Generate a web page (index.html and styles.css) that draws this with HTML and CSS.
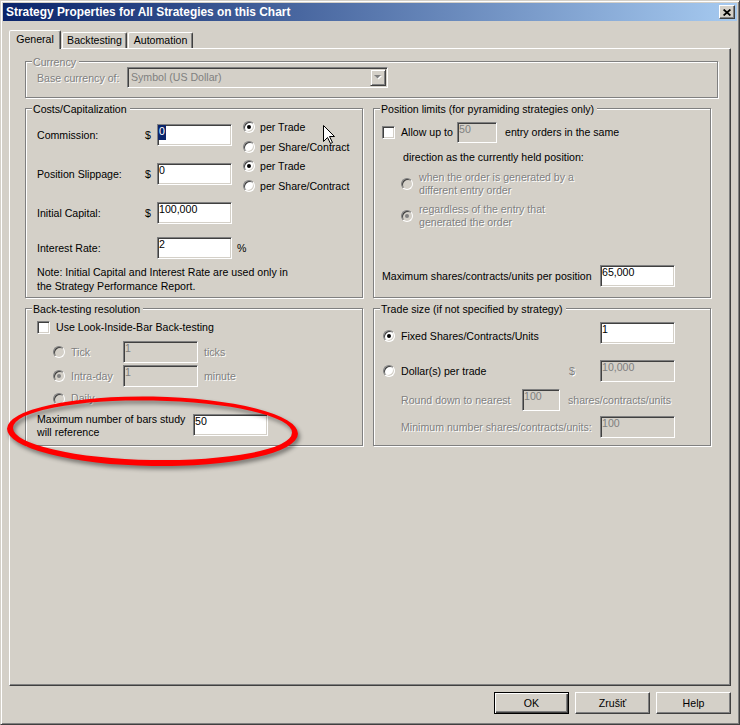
FILE: index.html
```html
<!DOCTYPE html>
<html lang="en">
<head>
<meta charset="utf-8">
<title>Strategy Properties</title>
<link rel="stylesheet" href="styles.css">
</head>
<body>
<div class="window">
  <div class="titlebar">
    <span class="title">Strategy Properties for All Strategies on this Chart</span>
    <span class="close"><svg width="8" height="7" viewBox="0 0 8 7"><path d="M0.6 0.5L7.4 6.5M7.4 0.5L0.6 6.5" stroke="#000" stroke-width="1.7" fill="none"/></svg></span>
  </div>

  <div class="tabs">
    <div class="tab active">General</div>
    <div class="tab">Backtesting</div>
    <div class="tab">Automation</div>
  </div>

  <div class="panel">
    <div class="group currency">
      <span class="legend disabled">Currency</span>
      <div class="cur-row">
        <span class="cur-label disabled">Base currency of:</span>
        <div class="select">
          <span class="select-text">Symbol (US Dollar)</span>
          <span class="drop"><svg width="8" height="5" viewBox="0 0 8 5"><polygon points="1,1 8,1 4.5,4.5" fill="#fff"/><polygon points="0,0 7,0 3.5,3.5" fill="#808080"/></svg></span>
        </div>
      </div>
    </div>

    <div class="row">
      <div class="group costs">
        <span class="legend">Costs/Capitalization</span>
        <div class="costs-grid">
          <span class="cell lbl">Commission:</span>
          <span class="cell">$</span>
          <span class="edit"><span class="sel">0</span></span>
          <span class="radios">
            <span class="opt"><span class="radio checked"></span>per Trade</span>
            <span class="opt"><span class="radio"></span>per Share/Contract</span>
          </span>

          <span class="cell lbl">Position Slippage:</span>
          <span class="cell">$</span>
          <span class="edit">0</span>
          <span class="radios">
            <span class="opt"><span class="radio checked"></span>per Trade</span>
            <span class="opt"><span class="radio"></span>per Share/Contract</span>
          </span>

          <span class="cell lbl">Initial Capital:</span>
          <span class="cell">$</span>
          <span class="edit">100,000</span>

          <span class="cell lbl">Interest Rate:</span>
          <span class="edit col3">2</span>
          <span class="cell pct">%</span>
        </div>
        <p class="note">Note: Initial Capital and Interest Rate are used only in<br>the Strategy Performance Report.</p>
      </div>

      <div class="group poslim">
        <span class="legend">Position limits (for pyramiding strategies only)</span>
        <div class="allow-row">
          <span class="check"></span>
          <span class="allow-lbl">Allow up to</span>
          <span class="edit dis w40">50</span>
          <span class="after">entry orders in the same</span>
        </div>
        <div class="direction">direction as the currently held position:</div>
        <div class="opt2 first"><span class="radio dis"></span><span class="disabled">when the order is generated by a<br>different entry order</span></div>
        <div class="opt2"><span class="radio dis checked"></span><span class="disabled">regardless of the entry that<br>generated the order</span></div>
        <div class="maxrow"><span class="maxlbl">Maximum shares/contracts/units per position</span><span class="edit">65,000</span></div>
      </div>
    </div>

    <div class="row">
      <div class="group backtest">
        <span class="legend">Back-testing resolution</span>
        <div class="chk-row"><span class="check"></span>Use Look-Inside-Bar Back-testing</div>
        <div class="res-row first"><span class="radio dis"></span><span class="res-lbl disabled">Tick</span><span class="edit dis">1</span><span class="unit disabled">ticks</span></div>
        <div class="res-row"><span class="radio dis checked"></span><span class="res-lbl disabled">Intra-day</span><span class="edit dis">1</span><span class="unit disabled">minute</span></div>
        <div class="res-row daily"><span class="radio dis"></span><span class="res-lbl disabled">Daily</span></div>
        <div class="bars-row"><span class="bars-lbl">Maximum number of bars study<br>will reference</span><span class="edit bars-edit">50</span></div>
      </div>

      <div class="group tradesize">
        <span class="legend">Trade size (if not specified by strategy)</span>
        <div class="ts-row r1"><span class="radio checked nudge"></span><span class="ts-lbl nudge">Fixed Shares/Contracts/Units</span><span class="edit">1</span></div>
        <div class="ts-row r2"><span class="radio"></span><span class="ts-lbl2">Dollar(s) per trade</span><span class="dollar disabled">$</span><span class="edit dis">10,000</span></div>
        <div class="ts-row r3"><span class="round-lbl disabled">Round down to nearest</span><span class="edit dis w38">100</span><span class="unit2 disabled">shares/contracts/units</span></div>
        <div class="ts-row r4"><span class="min-lbl disabled">Minimum number shares/contracts/units:</span><span class="edit dis">100</span></div>
      </div>
    </div>
  </div>

  <div class="buttons">
    <span class="btn default">OK</span>
    <span class="btn">Zrušiť</span>
    <span class="btn">Help</span>
  </div>

  <svg class="cursor" width="13" height="20" viewBox="0 0 13 20"><path d="M0.5 0.5L0.5 16.5L4.5 12.5L7.5 18.5L9.5 17.5L6.5 11.5L11.5 11.5Z" fill="#fff" stroke="#000" stroke-width="1" stroke-linejoin="miter"/></svg>

  <svg class="ellipse" width="320" height="95" viewBox="0 0 320 95"><path fill="#f00" fill-rule="evenodd" d="M6 45.25a145.5 34.75 0 1 0 291 0a145.5 34.75 0 1 0 -291 0Z M12 44.25a139.5 29.75 0 1 0 279 0a139.5 29.75 0 1 0 -279 0Z" transform="rotate(1 151 45)"/></svg>
</div>
</body>
</html>
```

FILE: styles.css
```css
html, body {
  margin: 0;
  padding: 0;
}
body {
  width: 740px;
  height: 725px;
  overflow: hidden;
  background: #d4d0c8;
  font-family: "Liberation Sans", Arial, sans-serif;
  font-size: 10.6px;
  line-height: 13px;
  color: #000;
}
.window {
  position: relative;
  box-sizing: border-box;
  width: 740px;
  height: 725px;
  background: #d4d0c8;
  border: 1px solid;
  border-color: #d4d0c8 #404040 #404040 #d4d0c8;
  box-shadow: inset 1px 1px #fff, inset -1px -1px #808080;
  padding: 2px;
}
.titlebar {
  height: 18px;
  display: flex;
  align-items: center;
  padding: 0 2px 0 3px;
  background: linear-gradient(to right, #0a246a, #a6caf0);
}
.title {
  color: #fff;
  font-weight: bold;
  font-size: 11.9px;
  white-space: nowrap;
}
.close {
  margin-left: auto;
  box-sizing: border-box;
  width: 16px;
  height: 14px;
  display: flex;
  align-items: center;
  justify-content: center;
  background: #d4d0c8;
  border: 1px solid;
  border-color: #fff #404040 #404040 #fff;
  box-shadow: inset -1px -1px #808080;
}
.tabs {
  margin-top: 9px;
  height: 18px;
  display: flex;
  align-items: flex-end;
  padding-left: 6px;
}
.tab {
  box-sizing: border-box;
  width: 65px;
  height: 16px;
  margin-left: 1px;
  border: 1px solid;
  border-bottom: none;
  border-color: #fff #404040 transparent #fff;
  box-shadow: inset -1px 0 #808080;
  border-radius: 2px 2px 0 0;
  text-align: center;
  padding-top: 1px;
  white-space: nowrap;
}
.tab.active {
  width: 52px;
  height: 19px;
  margin-left: 0;
  margin-bottom: -1px;
  padding-top: 2px;
  position: relative;
  z-index: 1;
  background: #d4d0c8;
}
.panel {
  box-sizing: border-box;
  margin-left: 6px;
  width: 722px;
  height: 638px;
  border: 1px solid;
  border-color: #fff #404040 #404040 #fff;
  box-shadow: inset -1px -1px #808080;
  padding: 12px 0 0 15px;
}
.group {
  position: relative;
  box-sizing: border-box;
  border: 1px solid #808080;
  box-shadow: inset 1px 1px #fff, 1px 1px #fff;
}
.legend {
  position: absolute;
  top: -6px;
  left: 6px;
  padding: 0 3px 0 1px;
  background: #d4d0c8;
  white-space: nowrap;
}
.disabled {
  color: #808080;
  text-shadow: 1px 1px 0 #fff;
}
.currency {
  width: 693px;
  height: 37px;
  padding: 5px 0 0 11px;
}
.cur-row {
  display: flex;
  align-items: center;
}
.cur-label {
  width: 90px;
  margin-top: 2px;
}
.select {
  box-sizing: border-box;
  width: 261px;
  height: 21px;
  display: flex;
  align-items: center;
  padding: 1px;
  background: #d4d0c8;
  border: 1px solid;
  border-color: #808080 #fff #fff #808080;
  box-shadow: inset 1px 1px #404040, inset -1px -1px #d4d0c8;
}
.select-text {
  padding-left: 2px;
  color: #808080;
}
.drop {
  margin-left: auto;
  box-sizing: border-box;
  width: 16px;
  height: 17px;
  display: flex;
  align-items: center;
  justify-content: center;
  border: 1px solid;
  border-color: #d4d0c8 #404040 #404040 #d4d0c8;
  box-shadow: inset 1px 1px #fff, inset -1px -1px #808080;
}
.row {
  display: flex;
  gap: 10px;
  margin-top: 10px;
}
.costs, .poslim {
  width: 338px;
  height: 190px;
}
.backtest, .tradesize {
  width: 338px;
  height: 138px;
}
.edit {
  box-sizing: border-box;
  flex: none;
  width: 75px;
  height: 22px;
  background: #fff;
  border: 1px solid;
  border-color: #808080 #fff #fff #808080;
  box-shadow: inset 1px 1px #404040, inset -1px -1px #d4d0c8;
  padding: 0 0 0 1px;
  line-height: 12px;
  white-space: nowrap;
}
.edit.dis {
  background: #d4d0c8;
  color: #808080;
}
.w40 { width: 40px; height: 21px; }
.w38 { width: 38px; }
.sel {
  display: inline-block;
  height: 15px;
  margin-left: -1px;
  padding: 0 1px;
  background: #0a246a;
  color: #fff;
}
.radio {
  box-sizing: border-box;
  flex: none;
  display: inline-block;
  position: relative;
  width: 12px;
  height: 12px;
  border-radius: 50%;
  border: 1px solid;
  border-color: #808080 #fff #fff #808080;
  box-shadow: inset 1px 1px #404040, inset -1px -1px #d4d0c8;
  background: #fff;
}
.radio.dis {
  background: #d4d0c8;
}
.radio.checked::after {
  content: "";
  position: absolute;
  left: 3px;
  top: 3px;
  width: 4px;
  height: 4px;
  border-radius: 50%;
  background: #000;
}
.radio.dis.checked::after {
  background: #808080;
}
.check {
  box-sizing: border-box;
  flex: none;
  width: 13px;
  height: 13px;
  border: 1px solid;
  border-color: #808080 #fff #fff #808080;
  box-shadow: inset 1px 1px #404040, inset -1px -1px #d4d0c8;
  background: #fff;
}

/* Costs */
.costs {
  padding: 15px 0 0 11px;
}
.costs-grid {
  display: grid;
  grid-template-columns: 108px 12px 75px 11px 1fr;
  grid-template-rows: 39px 39px 35px 22px;
  align-items: start;
}
.cell {
  height: 22px;
  line-height: 22px;
  white-space: nowrap;
}
.lbl {
  grid-column: 1;
}
.col3 {
  grid-column: 3;
}
.pct {
  grid-column: 4 / 6;
  padding-left: 5px;
}
.radios {
  grid-column: 5;
  display: flex;
  flex-direction: column;
  margin-top: -7px;
}
.opt {
  height: 20px;
  display: flex;
  align-items: center;
  gap: 5px;
  white-space: nowrap;
}
.note {
  margin: 6px 0 0 0;
  line-height: 14px;
}

/* Position limits */
.poslim {
  display: flex;
  flex-direction: column;
  padding: 13px 0 10px 8px;
}
.allow-row {
  height: 21px;
  display: flex;
  align-items: center;
}
.allow-row .check {
  margin-right: 6px;
}
.allow-lbl {
  width: 56px;
}
.after {
  margin-left: 8px;
}
.direction {
  margin: 8px 0 0 21px;
}
.opt2 {
  display: flex;
  align-items: center;
  margin: 6px 0 0 19px;
}
.opt2.first {
  margin-top: 7px;
}
.opt2 .radio {
  margin-right: 6px;
}
.maxrow {
  margin-top: auto;
  height: 22px;
  display: flex;
  align-items: center;
}
.maxlbl {
  width: 218px;
  white-space: nowrap;
}

/* Back-testing */
.backtest {
  padding: 12px 0 0 11px;
}
.chk-row {
  height: 13px;
  display: flex;
  align-items: center;
}
.chk-row .check {
  margin-right: 6px;
}
.res-row {
  height: 22px;
  display: flex;
  align-items: center;
  margin-top: 2px;
  padding-left: 16px;
}
.res-row.first {
  margin-top: 7px;
}
.res-row.daily {
  height: 13px;
  margin-top: 5px;
}
.res-row .radio {
  margin-right: 6px;
}
.res-lbl {
  width: 52px;
}
.unit {
  margin-left: 6px;
}
.bars-row {
  display: flex;
  align-items: flex-start;
  margin-top: 8px;
}
.bars-lbl {
  width: 156px;
  white-space: nowrap;
}
.bars-edit {
  margin-top: 1px;
}

/* Trade size */
.tradesize {
  padding: 13px 0 0 9px;
}
.ts-row {
  height: 22px;
  display: flex;
  align-items: center;
  white-space: nowrap;
}
.ts-row .radio {
  margin-right: 6px;
}
.nudge {
  margin-top: 6px;
}
.ts-lbl {
  width: 199px;
}
.r2 {
  margin-top: 16px;
}
.ts-lbl2 {
  width: 168px;
}
.dollar {
  width: 31px;
}
.r3 {
  margin-top: 7px;
  padding-left: 18px;
}
.round-lbl {
  width: 121px;
}
.unit2 {
  margin-left: 8px;
}
.r4 {
  margin-top: 5px;
  padding-left: 18px;
}
.min-lbl {
  width: 199px;
}

/* Buttons */
.buttons {
  display: flex;
  justify-content: flex-end;
  gap: 6px;
  margin-top: 6px;
  padding-right: 6px;
}
.btn {
  box-sizing: border-box;
  width: 75px;
  height: 22px;
  display: flex;
  align-items: center;
  justify-content: center;
  background: #d4d0c8;
  border: 1px solid;
  border-color: #fff #404040 #404040 #fff;
  box-shadow: inset -1px -1px #808080;
}
.btn.default {
  border-color: #000;
  box-shadow: inset 1px 1px #fff, inset -1px -1px #404040, inset -2px -2px #808080;
}

/* Overlays */
.cursor {
  position: absolute;
  left: 322px;
  top: 124px;
}
.ellipse {
  position: absolute;
  left: 0;
  top: 385px;
  filter: drop-shadow(2px 3px 2px rgba(0, 0, 0, 0.45));
}
```
